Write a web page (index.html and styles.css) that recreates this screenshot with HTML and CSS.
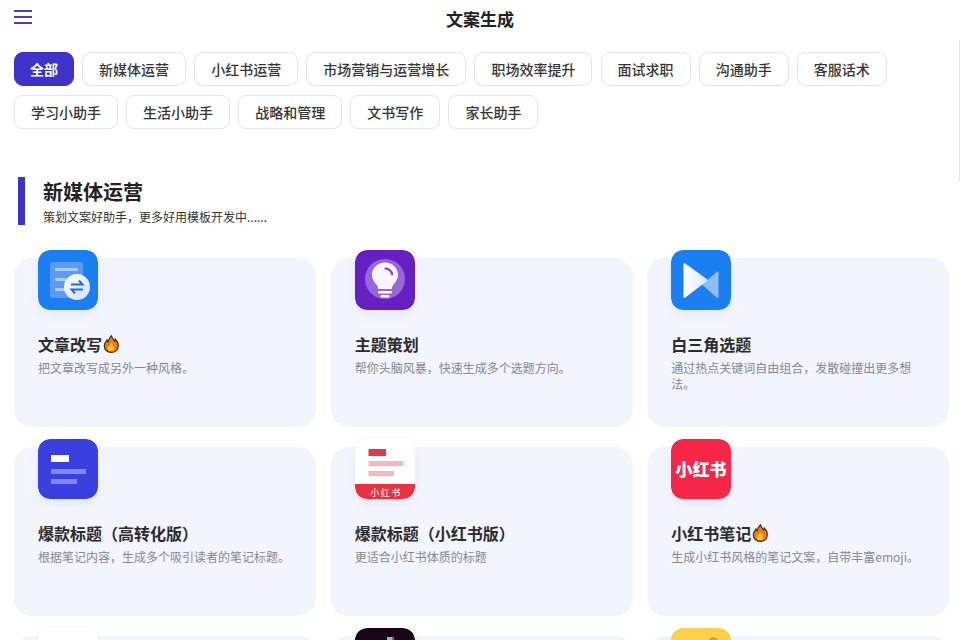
FILE: index.html
```html
<!DOCTYPE html>
<html lang="zh-CN">
<head>
  <meta charset="UTF-8">
  <meta name="viewport" content="width=960, initial-scale=1.0">
  <title>文案生成</title>
  <link rel="stylesheet" href="styles.css">
</head>
<body>
  <svg class="sprite" width="0" height="0">
    <symbol id="fire" viewBox="0 0 16 18">
      <path d="M8.500 .8c.6 2.600 2 3.600 3.400 5.400.5-.7.6-1.300.5-2 1.800 1.700 2.900 4 2.900 6.300 0 4.200-3 6.900-7 6.900s-7-2.700-7-6.600c0-2.600 1.400-4.300 2.700-6 .2 1 .5 1.700 1.200 2.200C5.400 5 6.500 2.700 8.500 .8z" fill="#f47a16" stroke="#4a2a14" stroke-width="1.200"/>
      <path d="M8.200 8c.4 1.400 2.900 2.800 2.900 5.200 0 1.900-1.400 3-3.200 3s-3.100-1.100-3.100-2.900c0-1.200.6-2 1.300-2.800.2.500.4.800.8 1 0-1.300.5-2.500 1.300-3.500z" fill="#fdc92f"/>
    </symbol>
  </svg>

  <header class="topbar">
    <button class="menu-btn" aria-label="菜单"><span></span><span></span><span></span></button>
    <h1>文案生成</h1>
  </header>

  <nav class="tabs">
    <a class="tab active">全部</a>
    <a class="tab">新媒体运营</a>
    <a class="tab">小红书运营</a>
    <a class="tab">市场营销与运营增长</a>
    <a class="tab">职场效率提升</a>
    <a class="tab">面试求职</a>
    <a class="tab">沟通助手</a>
    <a class="tab">客服话术</a>
    <a class="tab">学习小助手</a>
    <a class="tab">生活小助手</a>
    <a class="tab">战略和管理</a>
    <a class="tab">文书写作</a>
    <a class="tab">家长助手</a>
  </nav>

  <div class="scroll-line"></div>

  <section class="section">
    <div class="section-head">
      <h2>新媒体运营</h2>
      <p>策划文案好助手，更多好用模板开发中......</p>
    </div>

    <div class="cards">
      <div class="card">
        <svg class="icon" viewBox="0 0 60 60">
          <defs>
            <linearGradient id="swapFill" x1="0" y1="0" x2="1" y2="1">
              <stop offset="0" stop-color="#fff"/>
              <stop offset="1" stop-color="#cfe2fb"/>
            </linearGradient>
          </defs>
          <rect width="60" height="60" rx="12" fill="#1a7ff0"/>
          <rect x="12" y="12" width="33" height="36" rx="3" fill="#5d9bf2"/>
          <rect x="17" y="18" width="23" height="3" rx="1.500" fill="#a9cbf8"/>
          <rect x="17" y="28" width="12" height="3" rx="1.500" fill="#a9cbf8"/>
          <rect x="17" y="38" width="12" height="3" rx="1.500" fill="#a9cbf8"/>
          <circle cx="39" cy="37" r="13" fill="url(#swapFill)"/>
          <path d="M33 34.500h11.500l-3.500-4M45 39.500H33.500l3.500 4" fill="none" stroke="#1d6fdc" stroke-width="2"/>
        </svg>
        <h3>文章改写<svg class="fire"><use href="#fire"/></svg></h3>
        <p>把文章改写成另外一种风格。</p>
      </div>

      <div class="card">
        <svg class="icon" viewBox="0 0 60 60">
          <rect width="60" height="60" rx="12" fill="#661fc0"/>
          <circle cx="30" cy="29" r="20" fill="#9468d8"/>
          <path d="M30 12.500c7.500 0 13 5.500 13 12.500 0 4.800-2.800 7.500-4.800 10-1 1.300-1.200 2.600-1.200 4H23c0-1.400-.2-2.700-1.200-4-2-2.500-4.800-5.200-4.800-10 0-7 5.500-12.500 13-12.500z" fill="#faf5ff"/>
          <rect x="23" y="41" width="14" height="2.400" rx="1.200" fill="#faf5ff"/>
          <rect x="25.500" y="45" width="9" height="2.600" rx="1.300" fill="#faf5ff"/>
          <path d="M30.500 18.500c3.600.4 6 2.700 6.700 6" fill="none" stroke="#7a3dc9" stroke-width="2" stroke-linecap="round"/>
        </svg>
        <h3>主题策划</h3>
        <p>帮你头脑风暴，快速生成多个选题方向。</p>
      </div>

      <div class="card">
        <svg class="icon" viewBox="0 0 60 60">
          <defs>
            <linearGradient id="triFill" x1="0" y1="0" x2="1" y2="0">
              <stop offset="0" stop-color="#fff"/>
              <stop offset="1" stop-color="#dbe9fd"/>
            </linearGradient>
          </defs>
          <rect width="60" height="60" rx="12" fill="#1a7ff0"/>
          <path d="M47.500 22.500v24.500c0 1-.9 1.300-1.600.8L31 34.500 46 21.800c.7-.5 1.500-.2 1.500.7z" fill="#8fbdf8"/>
          <path d="M12.500 14.500v32c0 1.200 1 1.600 1.800 1L36 31c.6-.5.6-1.300 0-1.800L14.300 13.500c-.8-.6-1.800-.2-1.800 1z" fill="url(#triFill)"/>
        </svg>
        <h3>白三角选题</h3>
        <p>通过热点关键词自由组合，发散碰撞出更多想法。</p>
      </div>

      <div class="card">
        <svg class="icon" viewBox="0 0 60 60">
          <rect width="60" height="60" rx="12" fill="#3a3fe0"/>
          <rect x="13" y="16" width="18" height="7" fill="#fff"/>
          <rect x="13" y="30" width="35" height="5" fill="#8286f2"/>
          <rect x="13" y="40" width="26" height="5" fill="#8286f2"/>
        </svg>
        <h3>爆款标题（高转化版）</h3>
        <p>根据笔记内容，生成多个吸引读者的笔记标题。</p>
      </div>

      <div class="card">
        <svg class="icon" viewBox="0 0 60 60">
          <rect width="60" height="60" rx="12" fill="#fff"/>
          <rect x="13.500" y="10" width="17.500" height="7" fill="#e2394b"/>
          <rect x="13.500" y="22" width="35" height="5" fill="#f6b7bd"/>
          <rect x="13.500" y="32" width="25.500" height="5" fill="#f6b7bd"/>
          <path d="M0 45h60v3a12 12 0 0 1-12 12H12A12 12 0 0 1 0 48z" fill="#e8323f"/>
          <text class="icon-label" x="31" y="56.500" text-anchor="middle">小红书</text>
        </svg>
        <h3>爆款标题（小红书版）</h3>
        <p>更适合小红书体质的标题</p>
      </div>

      <div class="card">
        <svg class="icon" viewBox="0 0 60 60">
          <rect width="60" height="60" rx="12" fill="#f62648"/>
          <text class="icon-logo" x="30" y="37" text-anchor="middle">小红书</text>
        </svg>
        <h3>小红书笔记<svg class="fire"><use href="#fire"/></svg></h3>
        <p>生成小红书风格的笔记文案，自带丰富emoji。</p>
      </div>

      <!-- 第三行只露出图标顶部 -->
      <div class="card">
        <svg class="icon" viewBox="0 0 60 60"><rect width="60" height="60" rx="12" fill="#fff"/></svg>
      </div>
      <div class="card">
        <svg class="icon" viewBox="0 0 60 60">
          <rect width="60" height="60" rx="12" fill="#170617"/>
          <rect x="32" y="9" width="5" height="10" fill="#4fd8d8"/>
          <rect x="37" y="9" width="2" height="10" fill="#e8325a"/>
        </svg>
      </div>
      <div class="card">
        <svg class="icon" viewBox="0 0 60 60">
          <rect width="60" height="60" rx="12" fill="#fdd04a"/>
          <circle cx="42.500" cy="14" r="5" fill="#f0913a"/>
        </svg>
      </div>
    </div>
  </section>
</body>
</html>
```

FILE: styles.css
```css
* { box-sizing:border-box; }
html, body { height:640px; overflow:hidden; }
body { margin:0; background:#fff; color:#2b2b2b; font-family:'Noto Sans CJK SC', 'Noto Sans', sans-serif; position:relative; }
.sprite { position:absolute; }

.topbar { height:38px; display:flex; justify-content:center; position:relative; }
.topbar h1 { margin:0; font-size:17px; font-weight:700; line-height:37px; color:#222; }
.menu-btn { position:absolute; left:14px; top:10px; width:18px; height:14px; padding:0; border:none; background:none; display:flex; flex-direction:column; justify-content:space-between; }
.menu-btn span { display:block; height:2px; background:#4a3fc4; }

.tabs { display:flex; flex-wrap:wrap; gap:8.500px 8.120px; padding:14px 14px 0; }
.tab { height:34px; padding:0 16px; border:1px solid #e4e4e8; border-radius:9px; font-size:14px; font-weight:500; line-height:32px; color:#363636; background:#fff; }
.tab.active { background:#3f32c8; border-color:#3f32c8; color:#fff; font-weight:700; padding:0 15px; }

.scroll-line { position:absolute; right:0; top:40px; width:1px; height:142px; background:#e6e6e6; }

.section { padding-top:48px; }
.section-head { margin-left:18px; height:48px; padding-left:18px; border-left:7px solid #3f32c8; }
.section-head h2 { margin:0; font-size:20px; font-weight:700; line-height:30px; color:#222; }
.section-head p { margin:2px 0 0; font-size:12px; line-height:16px; color:#333; }

.cards { display:grid; grid-template-columns:repeat(3, 1fr); gap:20px 14.500px; padding:33px 10.500px 0 14px; }
.card { height:169px; padding:0 24px; border-radius:18px; background:#f3f5fe; }
.icon { display:block; width:60px; height:60px; margin-top:-8px; border-radius:12px; box-shadow:0 4px 12px rgba(60, 70, 130, 0.08); }
.icon-label { font-size:9px; letter-spacing:1.500px; fill:#fff; }
.icon-logo { font-size:17px; font-weight:900; fill:#fff; }
.card h3 { margin:22px 0 0; display:flex; align-items:center; font-size:16px; font-weight:700; line-height:24px; color:#2b2b2b; }
.fire { width:16px; height:18px; margin-left:1px; }
.card p { margin:4px 0 0; font-size:12px; line-height:16px; color:#85888f; }
```
